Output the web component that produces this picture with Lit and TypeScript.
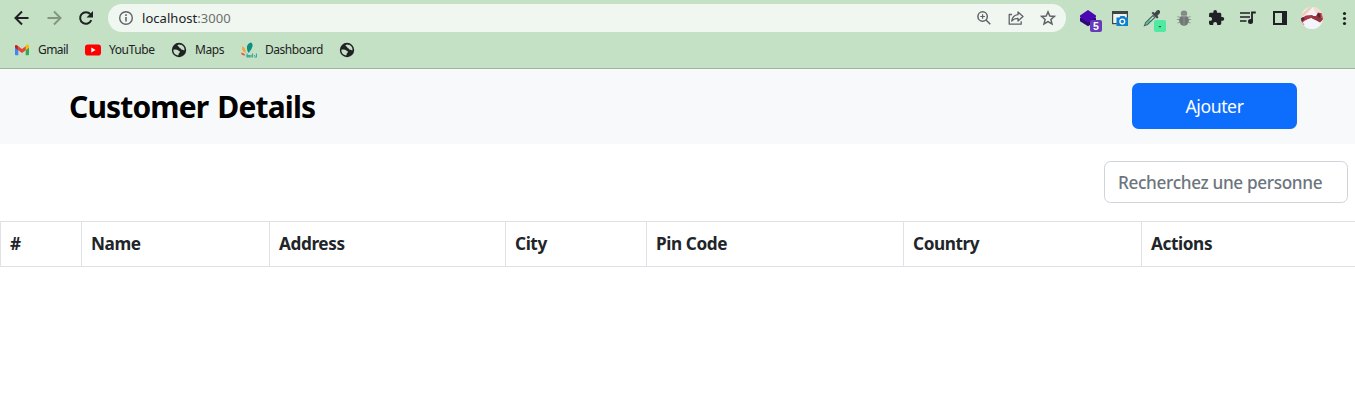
import { LitElement, html, css, svg } from "lit";
import { customElement } from "lit/decorators.js";

const cell = (content: unknown, label: string) => html`
  <svg class="cell" viewBox="0 0 32 36" role="img" aria-label=${label}>${content}</svg>
`;

const small = (content: unknown) => html`<svg class="fav" viewBox="0 0 16 16" aria-hidden="true">${content}</svg>`;

const globe = svg`
  <circle cx="8" cy="8" r="7.200" fill="#202124"/>
  <path d="M7.800 2.600C6.300 3 6 4.200 7.400 4.600c1.200.3.600 1.500 1.800 1.700.9.200.6 1.500 1.900 1.500 1.100 0 1.300.8 2.400.500A5.600 5.600 0 0 0 10.200 2.800c-.6.5-1.500-.4-2.400-.2z" fill="#c5e1c5"/>
  <path d="M2.300 7.800c2.400-.3 3.800-.4 4.700.5.800.8 1.700.5 1.900 1.400.2.900-1 1.100-1.200 1.900-.2.800.2 1.500-.6 2A5.900 5.900 0 0 1 2.300 7.800z" fill="#c5e1c5"/>`;

const gmail = svg`
  <path d="M1 3.900v8.300c0 .6.400 1 1 1h2.300V6.800z" fill="#4285f4"/>
  <path d="M15 3.900v8.300c0 .6-.4 1-1 1h-2.300V6.800z" fill="#34a853"/>
  <path d="M11.700 4.300v4L15 5.800V4.200c0-1.500-1.700-2-2.700-1.300z" fill="#fbbc04"/>
  <path d="M4.300 8.300v-4L8 7.100l3.700-2.800v4L8 11.100z" fill="#ea4335"/>
  <path d="M1 4.200v1.600l3.300 2.500v-4l-.6-.5C2.500 2.700 1 3 1 4.200z" fill="#c5221f"/>`;

const youtube = svg`
  <rect x="0" y="2.500" width="16" height="11" rx="2.800" fill="#f00"/>
  <path d="M6.300 5.600v4.800L10.600 8z" fill="#fff"/>`;

const bakeli = svg`
  <path d="M7.500 11C4.500 6 6 1 10 .5c3 1.500 1.500 6-2.500 10.500z" fill="#0a8f80"/>
  <path d="M4.500 11C1 9 .4 6 1.500 4.200 4.200 5.500 5 8 4.500 11z" fill="#f9a13a"/>
  <path d="M4.300 13.500C1.500 13.800.2 12.500 0 10.800c2-.3 3.700.8 4.300 2.700z" fill="#ef5545"/>
  <path d="M6 11.500v4M7 13.500h1.500V15H7zM10 13v2.500M11.500 11.500v4M13 13.500h1.500M13 15h2M15.500 11.500V15.500" stroke="#38a99b" fill="none" stroke-width="1.200"/>`;

const bookmarks = [
  { icon: gmail, text: "Gmail", cls: "b-gmail" },
  { icon: youtube, text: "YouTube", cls: "b-youtube" },
  { icon: globe, text: "Maps", cls: "b-maps" },
  { icon: bakeli, text: "Dashboard", cls: "b-dash" },
  { icon: globe, text: "", cls: "" },
];

@customElement("browser-bar")
class BrowserBar extends LitElement {
  static styles = css`
    :host {
      display: block;
      box-sizing: border-box;
      height: 69px;
      background: #c5e1c5;
      border-bottom: 1px solid #9db49e;
      overflow: hidden;
      font-family: "Noto Sans", "Open Sans", sans-serif;
      color: #202124;
    }
    .row { display: flex; height: 36px; padding-left: 6px; overflow: hidden; }
    .cell { flex: none; display: block; width: 32px; height: 36px; }
    .pill {
      flex: none;
      box-sizing: border-box;
      display: flex;
      align-items: center;
      width: 958px;
      height: 28px;
      margin: 4px 6px 0;
      padding: 0 2px;
      border-radius: 14px;
      background: #f0f7f0;
    }
    .url { flex: 1; font-size: 13px; line-height: 28px; letter-spacing: 0.04px; white-space: nowrap; }
    .port { color: #6b716d; }
    .marks {
      display: grid;
      grid-template-columns: 71px 86px 70px 98px 20px;
      align-items: center;
      height: 28px;
      padding-left: 14px;
      font-size: 12px;
      line-height: 28px;
    }
    .mark { display: flex; align-items: center; gap: 8px; white-space: nowrap; }
    .fav { flex: none; width: 16px; height: 16px; display: block; }
    .b-gmail { letter-spacing: -0.55px; }
    .b-youtube { letter-spacing: -0.42px; }
    .b-maps { letter-spacing: -0.4px; }
    .b-dash { letter-spacing: -0.48px; }
    .badge { font: 700 10.500px "Liberation Sans", sans-serif; fill: #fff; }
  `;

  render() {
    return html`
      <div class="row">
        ${cell(svg`<path d="M22.500 18H10M16 11.500L9.500 18l6.500 6.500" fill="none" stroke="#202124" stroke-width="2"/>`, "Back")}
        ${cell(svg`<path d="M9.500 18H22M16 11.500l6.500 6.500-6.500 6.500" fill="none" stroke="#83967f" stroke-width="2"/>`, "Forward")}
        ${cell(svg`<path d="M21.300 20.200A5.800 5.800 0 1 1 20.400 14.200" fill="none" stroke="#202124" stroke-width="2"/><path d="M23 11v6.500h-6.500z" fill="#202124"/>`, "Reload")}
        <div class="pill">
          ${cell(svg`<circle cx="16" cy="18" r="6.300" fill="none" stroke="#5f6368" stroke-width="1.400"/><path d="M15.200 17h1.600v4.500h-1.600zM15.200 14.200h1.600v1.700h-1.600z" fill="#5f6368"/>`, "Site information")}
          <span class="url">localhost<span class="port">:3000</span></span>
          ${cell(svg`<g fill="none" stroke="#5f6368" stroke-width="1.500"><circle cx="14.600" cy="16.500" r="4.700"/><path d="M18 20l4.300 4.300"/><path d="M14.600 14.200v4.600M12.300 16.500h4.600" stroke-width="1.200"/></g>`, "Zoom")}
          ${cell(svg`<g fill="none" stroke="#5f6368" stroke-width="1.300" stroke-linejoin="round"><path d="M12 14.500H9.200v9.700h12v-3"/><path d="M18 12l5 4.500-5 4.500v-2.700c-2.800 0-4.700.7-6.300 2.700.5-3.600 2.500-5.800 6.300-6.300z"/></g>`, "Share")}
          ${cell(svg`<path d="M16 11.800l1.800 4.200 4.600.4-3.500 3 1.100 4.500-4-2.400-4 2.400 1.100-4.500-3.500-3 4.600-.4z" fill="none" stroke="#5f6368" stroke-width="1.500"/>`, "Bookmark")}
        </div>
        ${cell(svg`<path d="M8 18v3.200l8 5 8-5V18z" fill="#2c0874"/><path d="M16 10l8 5.500v1.700l-8 5.300-8-5.300v-1.700z" fill="#4a08b4"/><rect x="18" y="20" width="12" height="12" rx="2" fill="#673ab7"/><text x="24" y="29.800" text-anchor="middle" class="badge">5</text>`, "Extension")}
        ${cell(svg`<rect x="8.600" y="11.600" width="14.800" height="12" fill="#eef5f0" stroke="#414545" stroke-width="1.200"/><path d="M8 11h16v3H8z" fill="#414545"/><path d="M12.500 17.500h3l1-1.500h4l1 1.500H24V26H12.500z" fill="#0f7fd0"/><circle cx="18.300" cy="21.600" r="2.400" fill="none" stroke="#fff" stroke-width="1.300"/>`, "Screenshot extension")}
        ${cell(svg`<path d="M17 15.500l-7.300 7-1.200 3 3-1 7.300-7z" fill="#b9eadb" stroke="#44625a" stroke-width="1.100"/><path d="M13 20.500l-3 3.300 1.200.3 4.500-4.300z" fill="#29bb91"/><path d="M15.500 13l1.500-1.300 1.600 1.200 2-2.200c2.200-1.700 4.600.7 3 2.900l-2.200 2.100 1 1.500-1.300 1.500z" fill="#414747"/><rect x="18" y="20" width="12" height="12" rx="2" fill="#4eeaa1"/><rect x="22.800" y="26" width="2.200" height="1.200" fill="#285a42"/>`, "Color picker extension")}
        ${cell(svg`<g fill="none" stroke="#8b978b" stroke-width="1"><path d="M12 17.500l-2.500-1M20 17.500l2.500-1M12 19.500H8.800M20 19.500h3.200M12 22l-2.500 1M20 22l2.500 1"/></g><ellipse cx="16" cy="20.300" rx="4.800" ry="5.500" fill="#737876"/><ellipse cx="16" cy="13.400" rx="3.200" ry="2.900" fill="#858a88"/><path d="M12.500 16h7" stroke="#b7c7b8" stroke-width=".7"/><path d="M16 17v8" stroke="#8d9490" stroke-width="1"/>`, "Bug extension")}
        ${cell(svg`<path transform="translate(7.600 9.200) scale(.72)" d="M20.500 11H19V7c0-1.100-.9-2-2-2h-4V3.500C13 2.120 11.880 1 10.500 1S8 2.120 8 3.500V5H4c-1.100 0-1.990.9-1.990 2v3.800H3.500c1.490 0 2.700 1.210 2.700 2.700s-1.210 2.700-2.700 2.700H2V20c0 1.100.9 2 2 2h3.800v-1.500c0-1.490 1.210-2.700 2.700-2.700 1.490 0 2.700 1.210 2.700 2.700V22H17c1.100 0 2-.9 2-2v-4h1.500c1.380 0 2.500-1.120 2.500-2.500S21.880 11 20.500 11z" fill="#202124"/>`, "Extensions")}
        ${cell(svg`<path d="M8 13h10M8 17h10M8 21h6.500" stroke="#202124" stroke-width="1.700"/><path d="M20 21.200V12.500h3.800" stroke="#202124" stroke-width="1.800" fill="none"/><circle cx="18.500" cy="21.400" r="2.500" fill="#202124"/>`, "Media")}
        ${cell(svg`<path d="M9 11h14v14H9zM11 13v10h7V13z" fill="#202124" fill-rule="evenodd"/>`, "Side panel")}
        ${cell(svg`
          <clipPath id="av"><circle cx="16" cy="18" r="11"/></clipPath>
          <g clip-path="url(#av)">
            <rect x="5" y="7" width="22" height="22" fill="#f6f1f2"/>
            <path d="M5 15l8-8h4l-7 7-5 4z" fill="#efcdbd"/>
            <path d="M17 7h5l5 6-4 2-4-3z" fill="#f1dccd"/>
            <path d="M5 18.500l5-3 6-.5 3 2-5 1.500-5 2-4 3z" fill="#a83a42"/>
            <path d="M16 16l4 0 2-3.500 4 1 1 6-3 3-4-2-4-1.500z" fill="#96343f"/>
            <path d="M5 18l3-1 .5 2.500-3 2z" fill="#54284f"/>
            <path d="M21 14l2.500-.5 1 3.500-2 1z" fill="#4b264e"/>
            <path d="M7 24l5-5 4-.5 5 2.500 4 3-6 6h-8z" fill="#f4f5fc"/>
            <path d="M6 22l2 3M25.500 13l.5 5" stroke="#e56b42" stroke-width="1"/>
          </g>`, "Profile")}
        ${cell(svg`<g fill="#202124"><circle cx="16.500" cy="13.500" r="1.600"/><circle cx="16.500" cy="18.500" r="1.600"/><circle cx="16.500" cy="23.500" r="1.600"/></g>`, "Menu")}
      </div>
      <div class="marks">
        ${bookmarks.map((b) => html`<span class="mark">${small(b.icon)}${b.text ? html`<span class=${b.cls}>${b.text}</span>` : ""}</span>`)}
      </div>
    `;
  }
}

@customElement("app-root")
class AppRoot extends LitElement {
  static styles = css`
    :host {
      display: block;
      height: 400px;
      overflow: hidden;
      background: #fff;
      color: #212529;
      font-family: "Noto Sans", "Open Sans", sans-serif;
      font-size: 17.600px;
    }
    .head {
      box-sizing: border-box;
      display: flex;
      justify-content: space-between;
      align-items: flex-start;
      height: 75px;
      padding: 14px 58px 0 69px;
      background: #f8f9fb;
    }
    .title { margin: 0; padding-top: 5px; color: #000; font-size: 30px; line-height: 38px; font-weight: 700; letter-spacing: -0.85px; word-spacing: 2px; white-space: nowrap; }
    .add {
      width: 165px;
      height: 46px;
      padding: 0;
      border: 0;
      border-radius: 6.500px;
      background: #0d6efd;
      color: #fff;
      font: inherit;
      line-height: 46px;
      letter-spacing: -0.4px;
    }
    .tools { display: flex; justify-content: flex-end; padding: 17px 7px 18px 0; }
    .search {
      box-sizing: border-box;
      width: 244px;
      height: 42px;
      padding: 0 13px;
      border: 1px solid #ced4da;
      border-radius: 6.500px;
      background: #fff;
      color: #212529;
      font: inherit;
      font-size: 17.200px;
      font-weight: 500;
      letter-spacing: -0.35px;
    }
    .search::placeholder { color: #6c757d; opacity: 1; }
    .grid {
      display: grid;
      grid-template-columns: 81px 188px 236px 141px 257px 238px 215px;
      box-sizing: border-box;
      height: 46px;
      border: solid #dee2e6;
      border-width: 1px 0;
    }
    .th { box-sizing: border-box; padding-left: 9px; border-left: 1px solid #dee2e6; line-height: 43px; font-size: 17.200px; font-weight: 700; letter-spacing: -0.4px; white-space: nowrap; }
  `;

  render() {
    const columns = ["#", "Name", "Address", "City", "Pin Code", "Country", "Actions"];
    return html`
      <browser-bar></browser-bar>
      <header class="head">
        <h2 class="title">Customer Details</h2>
        <button class="add">Ajouter</button>
      </header>
      <div class="tools"><input class="search" placeholder="Recherchez une personne" /></div>
      <div class="grid" role="row">${columns.map((c) => html`<div class="th" role="columnheader">${c}</div>`)}</div>
    `;
  }
}
